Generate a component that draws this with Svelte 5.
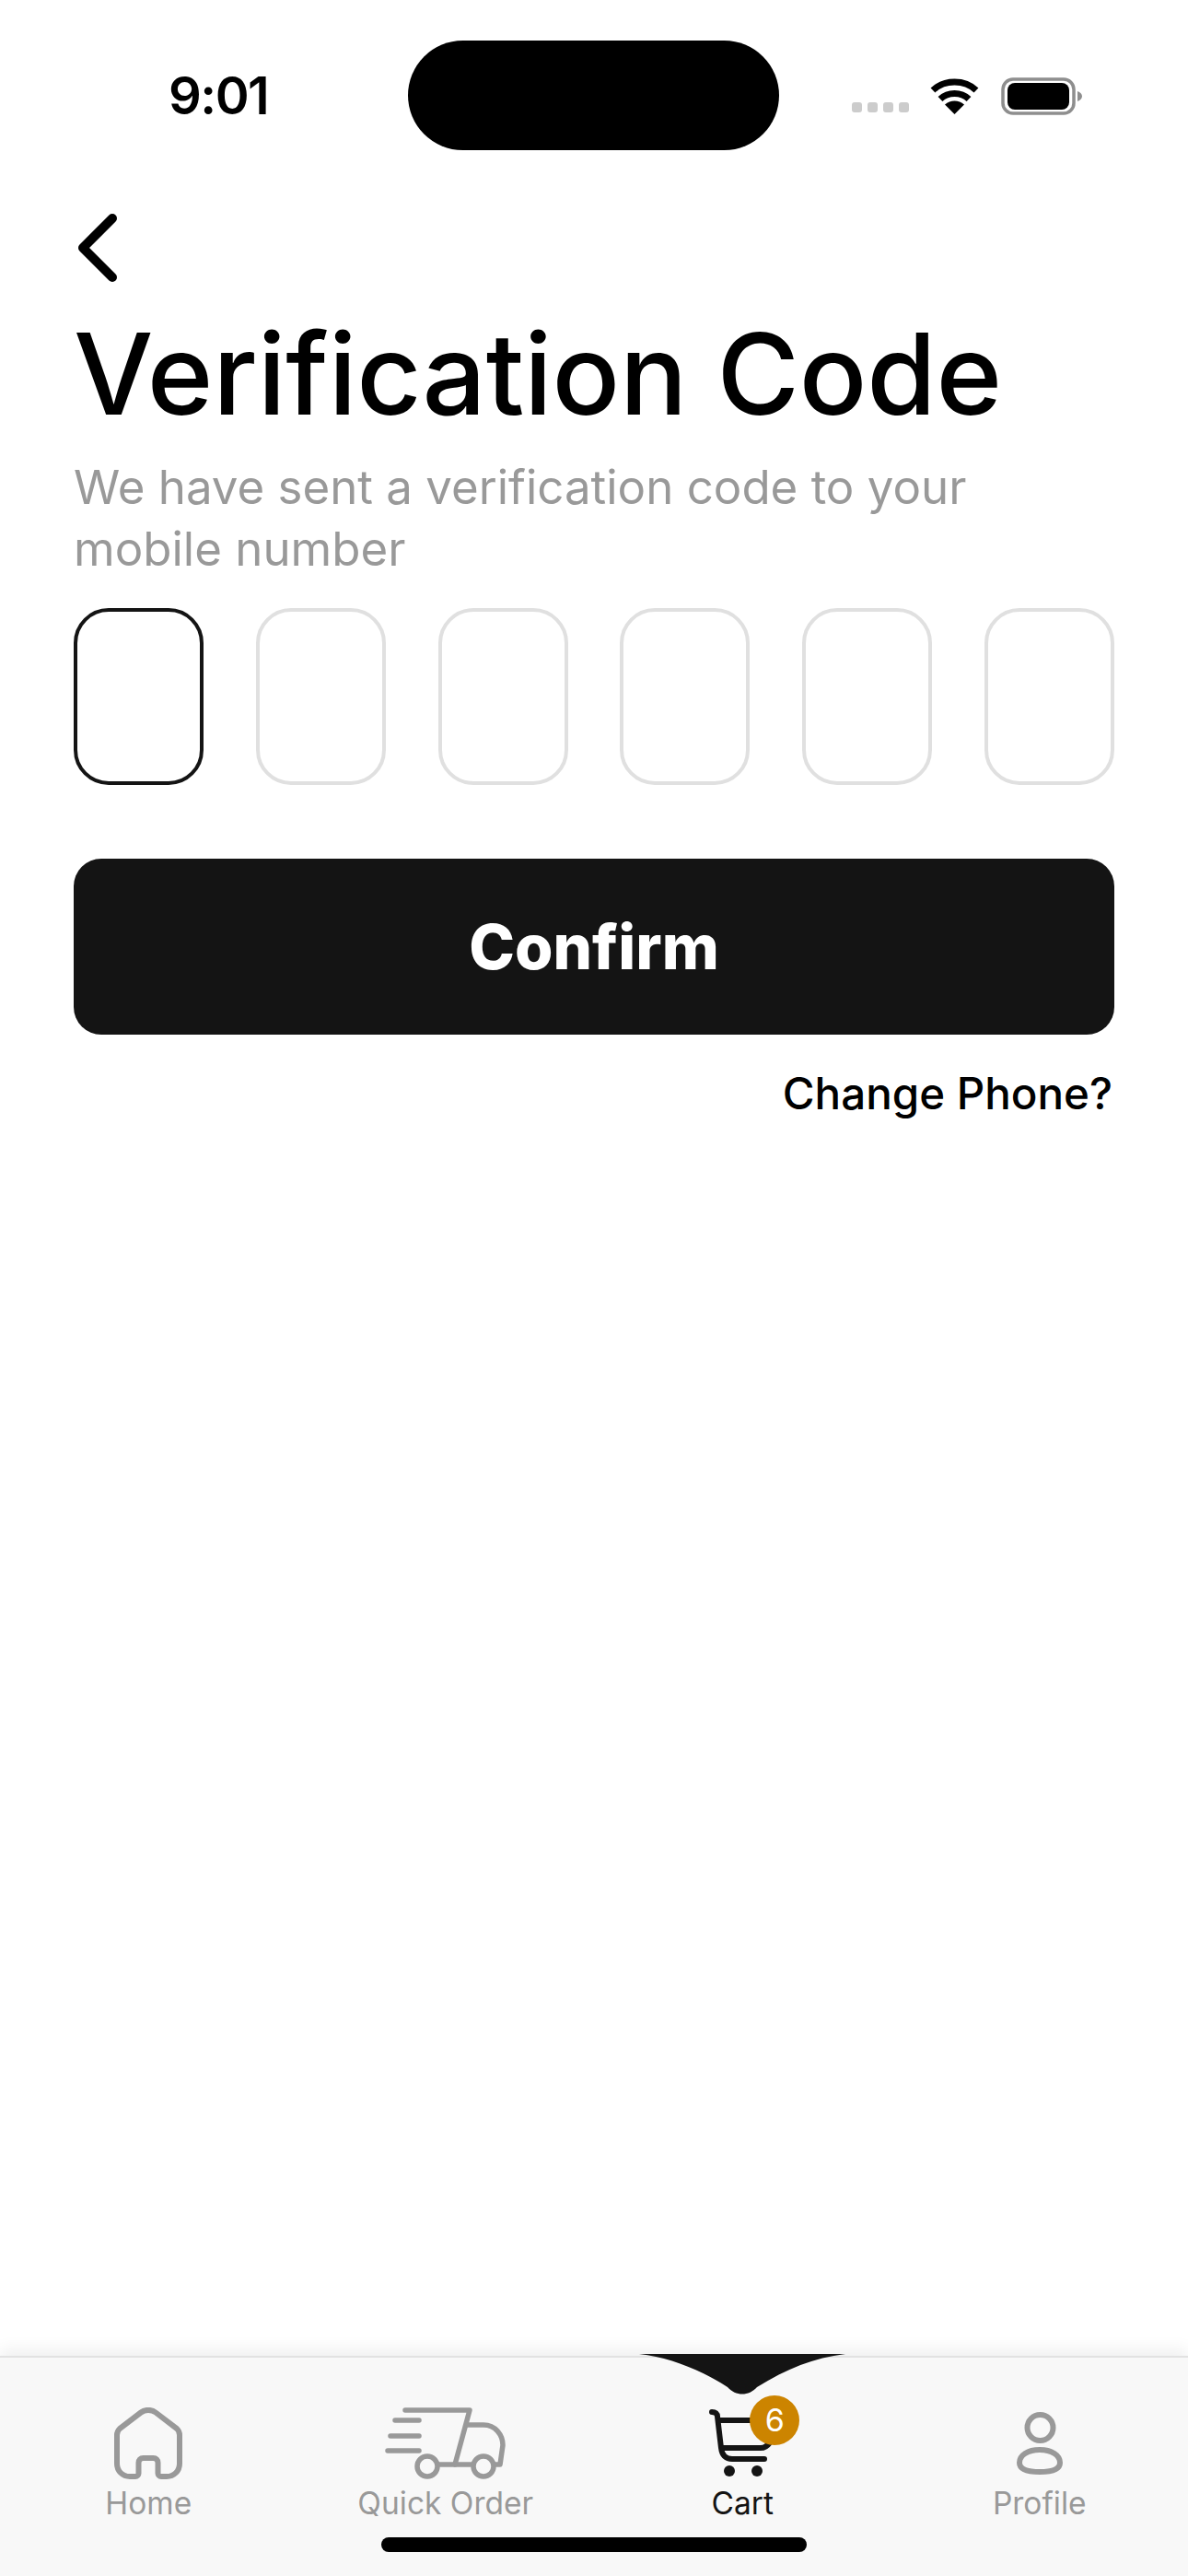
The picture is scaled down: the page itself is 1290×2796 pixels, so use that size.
<script>
	const boxes = [0, 1, 2, 3, 4, 5]
	let code = $state(["", "", "", "", "", ""])
</script>

<div class="page">
	<header class="status">
		<span class="time">9:01</span>
		<div class="island"></div>
		<div class="signals">
			<div class="dots"><i></i><i></i><i></i><i></i></div>
			<svg class="wifi" width="53" height="39" viewBox="0 0 53 39">
				<path d="M26.500 39L16 28.500C22 23 31 23 37 28.500Z" fill="#000" />
				<path d="M11 22.500C19.500 14.500 33.500 14.500 42 22.500" fill="none" stroke="#000" stroke-width="7" />
				<path d="M3 13C15.500 1 37.500 1 50 13" fill="none" stroke="#000" stroke-width="7" />
			</svg>
			<svg class="battery" width="88" height="41" viewBox="0 0 88 41">
				<rect x="2" y="2" width="77" height="37" rx="11" fill="none" stroke="#8e8e8e" stroke-width="3.500" />
				<rect x="7" y="6" width="67" height="29" rx="8" fill="#000" />
				<path d="M83 15c3 1 5 3 5 5.500s-2 4.500-5 5.500Z" fill="#8e8e8e" />
			</svg>
		</div>
	</header>

	<main class="content">
		<button class="back" aria-label="Back">
			<svg width="44" height="74" viewBox="0 0 44 74">
				<path d="M38 5L6 37L38 69" fill="none" stroke="#000" stroke-width="10" stroke-linecap="round" stroke-linejoin="round" />
			</svg>
		</button>
		<h1>Verification Code</h1>
		<p class="sub">We have sent a verification code to your<br />mobile number</p>
		<div class="otp">
			{#each boxes as i}
				<input class="box" class:active={i === 0} maxlength="1" inputmode="numeric" bind:value={code[i]} />
			{/each}
		</div>
		<button class="confirm">Confirm</button>
		<a class="change" href="#phone">Change Phone?</a>
	</main>

	<nav class="tabbar">
		<div class="notch">
			<svg width="224" height="45" viewBox="0 0 224 45">
				<path d="M0 0H224C190 4 160 16 128 36C119 46 105 46 96 36C64 16 34 4 0 0Z" fill="#141414" />
			</svg>
		</div>

		<div class="tab">
			<div class="icon">
				<svg width="74" height="78" viewBox="0 0 74 78" fill="none" stroke="#999" stroke-width="6">
					<path d="M3 30C3 27 4 25 6 23L29 5.500C33.500 2 40.500 2 45 5.500L68 23C70 25 71 27 71 30V61C71 69 65 75 57 75H51C49 75 47.500 73.500 47.500 71.500V60C47.500 57 45.500 55 42.500 55H31.500C28.500 55 26.500 57 26.500 60V71.500C26.500 73.500 25 75 23 75H17C9 75 3 69 3 61Z" />
				</svg>
			</div>
			<span>Home</span>
		</div>

		<div class="tab">
			<div class="icon">
				<svg width="131" height="78" viewBox="0 0 131 78" fill="none" stroke="#999" stroke-width="5.500" stroke-linecap="round" stroke-linejoin="round">
					<path d="M22 3H92L76 62" />
					<path d="M59 62H94" />
					<path d="M89 19H107C120 19 128 30 128 41L125 62H120" />
					<path d="M11 14H37M6 31H37M3 47H37" />
					<circle cx="46" cy="64" r="11" />
					<circle cx="107" cy="64" r="11" />
				</svg>
			</div>
			<span>Quick Order</span>
		</div>

		<div class="tab on">
			<div class="icon">
				<div class="cart">
					<svg width="68" height="74" viewBox="0 0 68 74" fill="none" stroke="#141414" stroke-width="6" stroke-linecap="round" stroke-linejoin="round">
						<path d="M3 3C7 3 9 5 9 8L13 42C14 50 18 54 25 54H60" />
						<path d="M10 12H56M14 42H56C60 42 64 39 66 36" />
						<circle cx="22" cy="67" r="6" fill="#141414" stroke="none" />
						<circle cx="52" cy="67" r="6" fill="#141414" stroke="none" />
					</svg>
					<span class="badge">6</span>
				</div>
			</div>
			<span>Cart</span>
		</div>

		<div class="tab">
			<div class="icon profile">
				<svg width="50" height="68" viewBox="0 0 50 68" fill="none" stroke="#999" stroke-width="6">
					<circle cx="25.500" cy="17" r="14" />
					<path d="M25 41C38 41 47 47 47 55C47 62 40 65 25 65C10 65 3 62 3 55C3 47 12 41 25 41Z" />
				</svg>
			</div>
			<span>Profile</span>
		</div>

		<div class="indicator"></div>
	</nav>
</div>

<style>
	:global(body) {
		background: #fff;
	}
	.page {
		min-height: 2796px;
		display: flex;
		flex-direction: column;
		font-family: Inter, "Noto Sans", sans-serif;
		color: #000;
	}
	.status {
		display: grid;
		grid-template-columns: 443px 403px 1fr;
		align-items: center;
		padding-top: 44px;
	}
	.time {
		padding-left: 183px;
		font-family: Inter, sans-serif;
		font-size: 56px;
		font-weight: 600;
		letter-spacing: -1.500px;
	}
	.island {
		height: 119px;
		background: #000;
		border-radius: 60px;
	}
	.signals {
		display: flex;
		align-items: flex-end;
		margin-left: 79px;
		padding-top: 1px;
	}
	.dots {
		display: flex;
		gap: 6px;
		margin-bottom: 2px;
	}
	.dots i {
		width: 11px;
		height: 11px;
		border-radius: 3px;
		background: #ccc;
	}
	.wifi {
		margin-left: 23px;
	}
	.battery {
		margin-left: 24px;
		margin-bottom: -1px;
	}
	.content {
		flex: 1;
		display: flex;
		flex-direction: column;
		padding: 69px 80px 0;
	}
	.back {
		align-self: flex-start;
		display: flex;
		padding: 0;
		margin-left: 4px;
		border: 0;
		background: none;
	}
	h1 {
		margin: 26px 0 0;
		font-size: 122px;
		line-height: 148px;
		font-weight: 500;
		letter-spacing: -0.200px;
		white-space: nowrap;
	}
	.sub {
		margin: 15px 0 0;
		font-size: 51px;
		line-height: 67px;
		color: #999;
		white-space: nowrap;
	}
	.otp {
		display: flex;
		justify-content: space-between;
		margin-top: 31px;
	}
	.box {
		box-sizing: border-box;
		width: 141px;
		height: 192px;
		padding: 0;
		border: 4px solid #e0e0e0;
		border-radius: 38px;
		background: #fff;
		outline: none;
		text-align: center;
		font: inherit;
		font-size: 60px;
	}
	.box.active {
		border-color: #141414;
	}
	.confirm {
		height: 191px;
		margin-top: 80px;
		border: 0;
		border-radius: 30px;
		background: #141414;
		color: #fff;
		font-family: inherit;
		font-size: 67px;
		font-weight: 800;
	}
	.change {
		align-self: flex-end;
		margin: 34px 2px 0 0;
		font-size: 47.500px;
		line-height: 60px;
		font-weight: 500;
		color: #000;
		text-decoration: none;
	}
	.tabbar {
		position: relative;
		display: grid;
		grid-template-columns: repeat(4, 1fr);
		align-content: start;
		height: 239px;
		box-sizing: border-box;
		padding-top: 52px;
		background: #f8f8f8;
		border-top: 2px solid #e2e2e2;
		box-shadow: 0 -8px 16px rgba(0, 0, 0, 0.06);
	}
	.notch {
		position: absolute;
		left: 694px;
		top: -4px;
		display: flex;
	}
	.tab {
		display: flex;
		flex-direction: column;
		align-items: center;
		font-size: 33.500px;
		line-height: 44px;
		color: #999;
	}
	.tab.on {
		color: #141414;
	}
	.icon {
		height: 80px;
		display: flex;
		align-items: flex-end;
		margin-bottom: 4px;
	}
	.icon.profile {
		align-items: flex-start;
		padding-top: 7px;
		box-sizing: border-box;
	}
	.cart {
		position: relative;
		display: flex;
		margin-left: -4px;
		margin-bottom: 2px;
	}
	.badge {
		position: absolute;
		left: 44px;
		top: -15px;
		width: 54px;
		height: 54px;
		border-radius: 50%;
		background: #cc8400;
		color: #fff;
		font-size: 34px;
		line-height: 54px;
		text-align: center;
	}
	.indicator {
		position: absolute;
		left: 414px;
		bottom: 26px;
		width: 462px;
		height: 16px;
		border-radius: 8px;
		background: #000;
	}
</style>
